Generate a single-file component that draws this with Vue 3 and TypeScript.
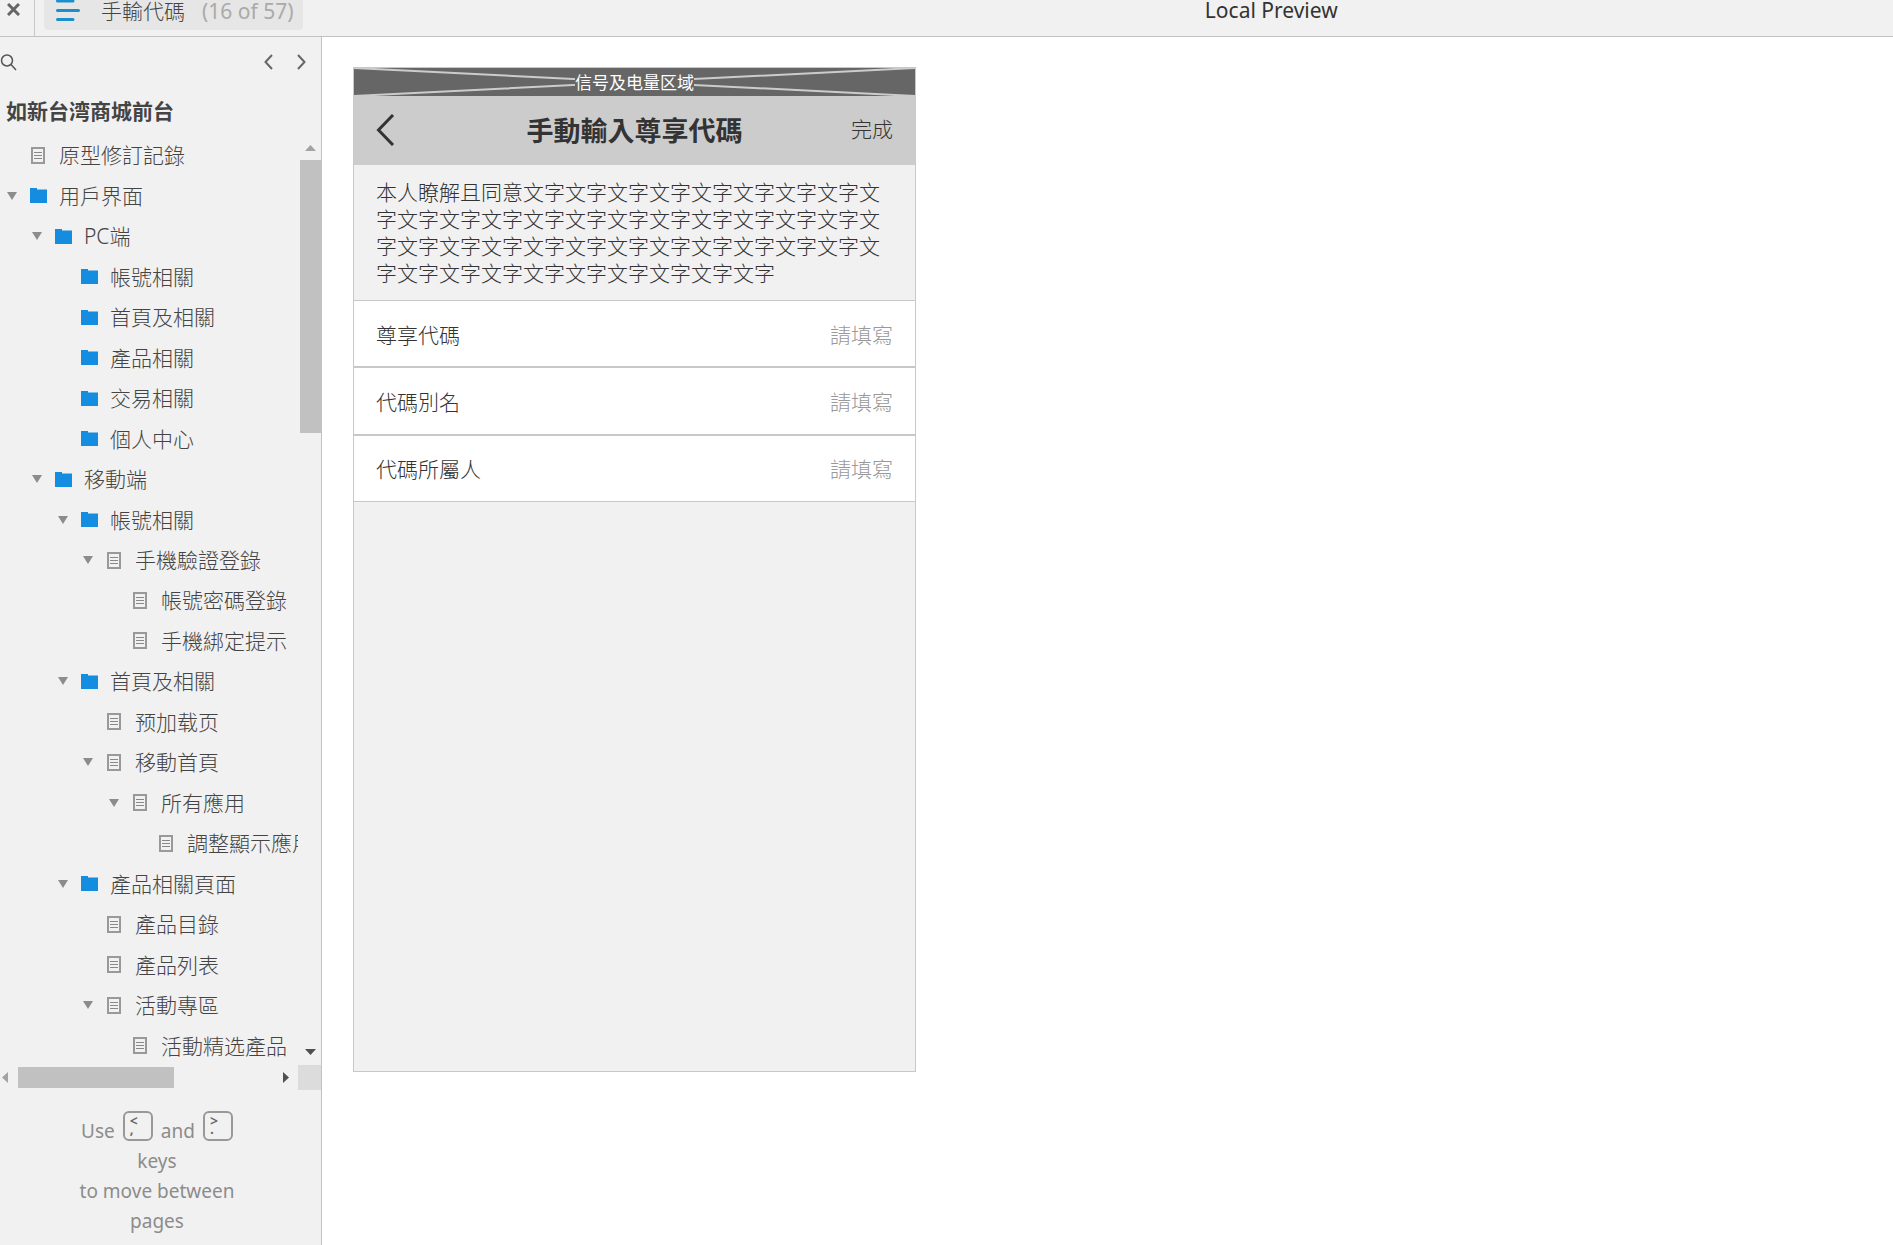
<script setup lang="ts">
import { ref } from 'vue'

type NodeKind = 'page' | 'folder'

interface TreeNode {
  label: string
  kind: NodeKind
  depth: number
  open?: boolean
}

const INDENT = 25.6

const nodes: TreeNode[] = [
  { label: '原型修訂記錄', kind: 'page', depth: 0 },
  { label: '用戶界面', kind: 'folder', depth: 0, open: true },
  { label: 'PC端', kind: 'folder', depth: 1, open: true },
  { label: '帳號相關', kind: 'folder', depth: 2 },
  { label: '首頁及相關', kind: 'folder', depth: 2 },
  { label: '產品相關', kind: 'folder', depth: 2 },
  { label: '交易相關', kind: 'folder', depth: 2 },
  { label: '個人中心', kind: 'folder', depth: 2 },
  { label: '移動端', kind: 'folder', depth: 1, open: true },
  { label: '帳號相關', kind: 'folder', depth: 2, open: true },
  { label: '手機驗證登錄', kind: 'page', depth: 3, open: true },
  { label: '帳號密碼登錄', kind: 'page', depth: 4 },
  { label: '手機綁定提示', kind: 'page', depth: 4 },
  { label: '首頁及相關', kind: 'folder', depth: 2, open: true },
  { label: '预加载页', kind: 'page', depth: 3 },
  { label: '移動首頁', kind: 'page', depth: 3, open: true },
  { label: '所有應用', kind: 'page', depth: 4, open: true },
  { label: '調整顯示應用', kind: 'page', depth: 5 },
  { label: '產品相關頁面', kind: 'folder', depth: 2, open: true },
  { label: '產品目錄', kind: 'page', depth: 3 },
  { label: '產品列表', kind: 'page', depth: 3 },
  { label: '活動專區', kind: 'page', depth: 3, open: true },
  { label: '活動精选產品', kind: 'page', depth: 4 },
]

const indentOf = (depth: number): string => `${Math.floor(depth * INDENT)}px`

const terms = '本人瞭解且同意' + '文字'.repeat(42)

const fields = ref([
  { id: 'vip-code', label: '尊享代碼', value: '' },
  { id: 'code-alias', label: '代碼別名', value: '' },
  { id: 'code-owner', label: '代碼所屬人', value: '' },
])
</script>

<template>
  <div class="app">
    <header class="topbar">
      <button class="close" type="button" aria-label="Close">
        <svg width="13" height="13" viewBox="0 0 13 13"><path d="M1 1 12 12M12 1 1 12" /></svg>
      </button>
      <button class="page-tab" type="button">
        <svg class="burger" width="24" height="23" viewBox="0 0 24 23">
          <path d="M1.500 1H17M1.500 10.500H22.500M1.500 19.500H17" />
        </svg>
        <span class="page-name">手輸代碼</span>
        <span class="page-count">(16 of 57)</span>
      </button>
      <span class="gap-before"></span>
      <span class="preview">Local Preview</span>
      <span class="gap-after"></span>
    </header>

    <div class="body">
      <aside class="sidebar">
        <div class="tools">
          <button type="button" aria-label="Search">
            <svg width="17" height="17" viewBox="0 0 17 17">
              <circle cx="7" cy="6.500" r="5.500" class="thin" />
              <path d="M11 10.500 16 16" class="thin" />
            </svg>
          </button>
          <span class="arrows">
            <button type="button" aria-label="Previous page">
              <svg width="9" height="16" viewBox="0 0 9 16"><path d="M8 1 1.500 8 8 15" /></svg>
            </button>
            <button type="button" aria-label="Next page">
              <svg width="9" height="16" viewBox="0 0 9 16"><path d="M1 1 7.500 8 1 15" /></svg>
            </button>
          </span>
        </div>
        <h2 class="project">如新台湾商城前台</h2>

        <div class="tree-area">
          <ul class="tree">
            <li v-for="(node, i) in nodes" :key="i" :style="{ paddingLeft: indentOf(node.depth) }">
              <span class="toggle">
                <svg v-if="node.open" width="10" height="8" viewBox="0 0 10 8"><path d="M0 0H10L5 8Z" /></svg>
              </span>
              <span class="icon">
                <svg v-if="node.kind === 'folder'" width="17" height="15" viewBox="0 0 17 15">
                  <path d="M0 0H7V1.500H17V15H0Z" fill="#148ce0" />
                </svg>
                <svg v-else class="sheet" width="15" height="17" viewBox="0 0 15 17">
                  <rect x="2" y="1" width="12" height="15" />
                  <path d="M4 5.500H12M4 8.500H12M4 11.500H12" />
                </svg>
              </span>
              <a href="#">{{ node.label }}</a>
            </li>
          </ul>
          <div class="vbar">
            <svg width="11" height="6" viewBox="0 0 11 6"><path d="M0 6 5.500 0 11 6Z" fill="#a3a3a3" /></svg>
            <div class="vtrack"><div class="vthumb"></div></div>
            <svg width="11" height="6" viewBox="0 0 11 6"><path d="M0 0H11L5.500 6Z" fill="#505050" /></svg>
          </div>
        </div>

        <div class="hrow">
          <div class="hbar">
            <svg width="6" height="11" viewBox="0 0 6 11"><path d="M6 0V11L0 5.500Z" fill="#a3a3a3" /></svg>
            <div class="htrack"><div class="hthumb"></div></div>
            <svg width="6" height="11" viewBox="0 0 6 11"><path d="M0 0V11L6 5.500Z" fill="#505050" /></svg>
          </div>
          <div class="corner"></div>
        </div>

        <div class="help">
          <div class="help-keys">
            <span>Use</span>
            <kbd><span>&lt;</span><span>,</span></kbd>
            <span>and</span>
            <kbd><span>&gt;</span><span>.</span></kbd>
          </div>
          <div>keys</div>
          <div>to move between</div>
          <div>pages</div>
        </div>
      </aside>

      <main class="canvas">
        <section class="phone">
          <div class="status">
            <svg viewBox="0 0 562 28" preserveAspectRatio="none">
              <path d="M0 0 562 28M0 28 562 0" />
            </svg>
            <span>信号及电量区域</span>
          </div>
          <div class="navbar">
            <button class="back" type="button" aria-label="Back">
              <svg width="19" height="32" viewBox="0 0 19 32"><path d="M17 1 2.500 16 17 31" /></svg>
            </button>
            <h1>手動輸入尊享代碼</h1>
            <button class="done" type="button">完成</button>
          </div>
          <p class="terms">{{ terms }}</p>
          <form class="form" @submit.prevent>
            <div v-for="field in fields" :key="field.id" class="field">
              <label :for="field.id">{{ field.label }}</label>
              <input :id="field.id" v-model="field.value" type="text" placeholder="請填寫" />
            </div>
          </form>
        </section>
      </main>
    </div>
  </div>
</template>

<style>
body {
  background: #fff;
}
</style>

<style scoped>
* {
  box-sizing: border-box;
}

.app {
  display: flex;
  flex-direction: column;
  height: 100vh;
  font-family: 'Noto Sans', 'Noto Sans CJK TC', sans-serif;
  font-size: 21px;
  color: #444;
}

button {
  padding: 0;
  border: 0;
  background: none;
  font: inherit;
  color: inherit;
}

svg {
  display: block;
  flex: none;
}

.topbar {
  display: flex;
  flex: none;
  height: 37px;
  background: #f1f1f1;
  border-bottom: 1px solid #c2c2c2;
  white-space: nowrap;
}

.close {
  display: flex;
  width: 35px;
  padding: 3px 0 0 7px;
  border-right: 1px solid #c8c8c8;
}

.close svg {
  fill: none;
  stroke: #666;
  stroke-width: 3;
}

.page-tab {
  display: flex;
  align-items: flex-start;
  height: 30px;
  margin-left: 9px;
  padding: 0 9px 0 12px;
  border-radius: 0 0 4px 4px;
  background: #e6e6e6;
  line-height: 22px;
}

.burger {
  fill: none;
  stroke: #1a8fcb;
  stroke-width: 3;
  stroke-linecap: round;
}

.page-name {
  margin-left: 21px;
}

.page-count {
  margin-left: 17px;
  color: #aaa;
}

.gap-before {
  flex: 13;
}

.gap-after {
  flex: 8;
}

.preview {
  line-height: 21px;
  color: #333;
}

.body {
  display: flex;
  flex: 1;
  min-height: 0;
}

.sidebar {
  display: flex;
  flex-direction: column;
  flex: none;
  width: 322px;
  background: #f1f1f1;
  border-right: 1px solid #c2c2c2;
}

.tools {
  display: flex;
  justify-content: space-between;
  align-items: center;
  flex: none;
  height: 48px;
  padding: 2px 15px 0 0;
}

.tools svg {
  fill: none;
  stroke: #666;
  stroke-width: 2;
}

.tools .thin {
  stroke: #555;
  stroke-width: 1.500;
}

.arrows {
  display: flex;
  gap: 24px;
}

.project {
  flex: none;
  height: 50px;
  margin: 0;
  padding-left: 6px;
  font-family: 'Noto Sans', 'Noto Sans CJK SC', sans-serif;
  font-size: 21px;
  line-height: 52px;
}

.tree-area {
  display: flex;
  flex: 1;
  min-height: 0;
}

.tree {
  display: grid;
  grid-auto-rows: 1fr;
  flex: 1;
  min-width: 0;
  margin: 0 2px -1px 0;
  padding: 0;
  list-style: none;
  overflow: hidden;
}

.tree li {
  display: flex;
  align-items: center;
  min-width: 0;
  line-height: 40px;
  white-space: nowrap;
  overflow: hidden;
}

.tree a,
.page-name {
  font-weight: 300;
}

.toggle {
  flex: none;
  width: 10px;
  margin-left: 7px;
  fill: #8c8c8c;
}

.icon {
  flex: none;
  width: 17px;
  margin: 0 12px 0 13px;
}

.sheet {
  fill: none;
  stroke: #999;
  stroke-width: 2;
}

.sheet path {
  stroke-width: 1;
  stroke: #888;
}

.tree a {
  color: inherit;
  text-decoration: none;
}

.vbar {
  display: flex;
  flex-direction: column;
  align-items: center;
  flex: none;
  width: 21px;
  padding: 10px 0;
}

.vtrack {
  flex: 1;
  width: 100%;
  margin: 9px 0;
}

.vthumb {
  height: 31%;
  background: #c1c1c1;
}

.hrow {
  display: flex;
  flex: none;
  height: 25px;
}

.hbar {
  display: flex;
  align-items: center;
  flex: 1;
  padding: 0 9px 0 2px;
}

.htrack {
  flex: 1;
  height: 21px;
  margin: 0 10px;
}

.hthumb {
  width: 61%;
  height: 100%;
  background: #c1c1c1;
}

.corner {
  width: 23px;
  background: #dcdcdc;
}

.help {
  flex: none;
  padding: 21px 7px 9px 0;
  font-size: 19px;
  line-height: 30px;
  text-align: center;
  color: #8c8c8c;
}

.help-keys {
  display: flex;
  justify-content: center;
  gap: 8px;
  height: 35px;
}

.help-keys > span {
  line-height: 41px;
}

kbd {
  display: flex;
  flex-direction: column;
  width: 30px;
  height: 30px;
  padding: 4px 0 0 5px;
  border: 2px solid #999;
  border-radius: 6px;
  font-family: inherit;
  font-size: 14px;
  font-weight: 600;
  line-height: 8px;
  text-align: left;
  color: #666;
}

.canvas {
  flex: 1;
  min-width: 0;
  padding: 30px 31px;
  background: #fff;
}

.phone {
  width: 100%;
  max-width: 563px;
  aspect-ratio: 563 / 1005;
  border: 1px solid #c8c8c8;
  background: #f1f1f1;
  color: #333;
  font-family: 'Noto Sans CJK TC', sans-serif;
  font-weight: 300;
}

.status {
  display: grid;
  place-items: center;
  height: 28px;
  background: #666;
}

.status > * {
  grid-area: 1 / 1;
}

.status svg {
  width: 100%;
  height: 28px;
  fill: none;
  stroke: #ccc;
  stroke-width: 2;
}

.status span {
  z-index: 1;
  background: #666;
  color: #fff;
  font-family: 'Noto Sans CJK SC', sans-serif;
  font-size: 17px;
  font-weight: 400;
  line-height: 22px;
}

.navbar {
  display: grid;
  grid-template-columns: 1fr auto 1fr;
  align-items: center;
  height: 69px;
  padding: 0 22px 2px;
  background: #ccc;
}

.navbar h1 {
  margin: 0;
  font-size: 27px;
  line-height: 40px;
}

.back {
  justify-self: start;
}

.back svg {
  fill: none;
  stroke: #333;
  stroke-width: 3;
}

.done {
  justify-self: end;
  padding-bottom: 4px;
}

.terms {
  margin: 0;
  padding: 13px 22px 14px;
  line-height: 27px;
  word-break: break-all;
}

.form {
  display: flex;
  flex-direction: column;
  height: 202px;
}

.field {
  display: flex;
  align-items: center;
  flex: 1;
  padding: 0 22px;
  border-top: 1px solid #c8c8c8;
  border-bottom: 1px solid #c8c8c8;
  background: #fff;
}

.field input {
  flex: 1;
  min-width: 0;
  padding: 0;
  border: 0;
  outline: 0;
  background: none;
  font: inherit;
  color: inherit;
  text-align: right;
}

.field input::placeholder {
  color: #999;
}
</style>
